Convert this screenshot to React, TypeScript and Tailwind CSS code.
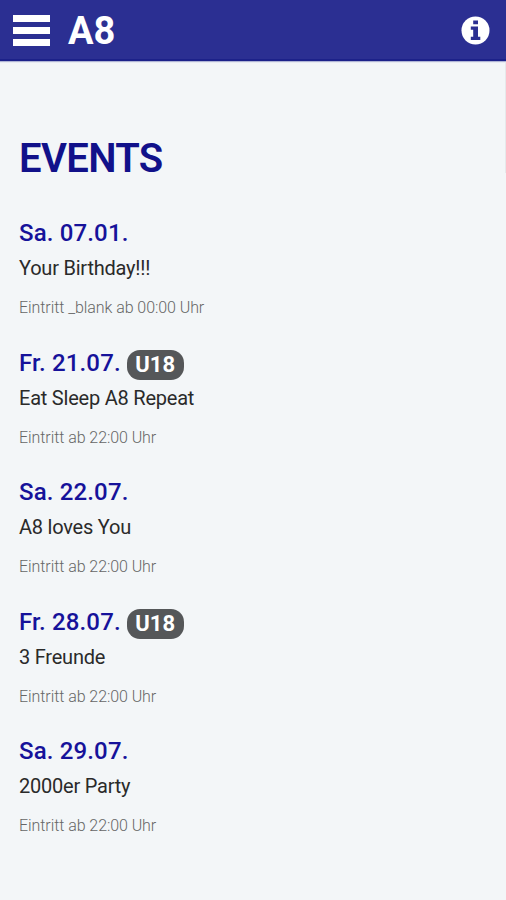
import React from "react"

const events = [
  { date: "Sa. 07.01.", title: "Your Birthday!!!", info: "Eintritt _blank ab 00:00 Uhr", u18: false },
  { date: "Fr. 21.07.", title: "Eat Sleep A8 Repeat", info: "Eintritt ab 22:00 Uhr", u18: true },
  { date: "Sa. 22.07.", title: "A8 loves You", info: "Eintritt ab 22:00 Uhr", u18: false },
  { date: "Fr. 28.07.", title: "3 Freunde", info: "Eintritt ab 22:00 Uhr", u18: true },
  { date: "Sa. 29.07.", title: "2000er Party", info: "Eintritt ab 22:00 Uhr", u18: false },
]

const InfoIcon = () => (
  <svg width="29" height="29" viewBox="0 0 29 29" fill="none">
    <circle cx="14.5" cy="14.5" r="14" fill="#fff" />
    <path
      d="M12.2 4.4h4.8v3.8h-4.8zM9.8 10.5h7.2v10.2h2.3v3.3H9.8v-3.3h2.4v-6.9H9.8z"
      fill="#2b2f92"
    />
  </svg>
)

const Header = () => {
  return (
    <header className="flex h-[61px] items-center border-b-2 border-[#1c2189] bg-[#2b2f92] pl-[13px] pr-4 shadow-[0_1px_1px_rgba(20,27,133,0.3)]">
      <button aria-label="Menu" className="mt-0.5 flex w-[37px] flex-col gap-[5px]">
        <span className="h-[7px] bg-white" />
        <span className="h-[7px] bg-white" />
        <span className="h-[7px] bg-white" />
      </button>
      <span className="mt-[3px] ml-[18px] font-['Roboto',sans-serif] text-[38px] leading-none font-bold text-white">
        A8
      </span>
      <button aria-label="Info" className="mt-px ml-auto">
        <InfoIcon />
      </button>
    </header>
  )
}

const App = () => {
  return (
    <div className="relative h-[900px] w-[506px] overflow-hidden bg-[#f3f6f8] font-['Roboto',sans-serif]">
      <Header />
      <main className="px-[19px] pt-[74px]">
        <h1 className="text-[40px] leading-[48px] font-semibold tracking-[-0.65px] text-[#11118a]">EVENTS</h1>
        <ul className="mt-[34px]">
          {events.map((event, idx) => (
            <li key={idx} className="h-[129.6px]">
              <h2 className="flex h-8 items-center text-[24px] leading-8 font-medium tracking-[0.15px] text-[#16129a]">
                {event.date}
                {event.u18 && (
                  <span className="mt-1 ml-1.5 flex h-[30px] w-[57px] items-center justify-center rounded-[13px] bg-[#555759] text-[22px] font-bold text-white">
                    U18
                  </span>
                )}
              </h2>
              <p className="mt-[7px] text-[20px] leading-6 tracking-[-0.22px] text-[#2a2a2a]">{event.title}</p>
              <p className="mt-[18px] text-[16px] leading-5 font-light tracking-[-0.07px] text-[#666]">{event.info}</p>
            </li>
          ))}
        </ul>
      </main>
      {/* scroll indicator */}
      <div className="absolute top-[62px] right-0 h-[111px] w-px bg-[#e6e9eb]" />
    </div>
  )
}

export default App
